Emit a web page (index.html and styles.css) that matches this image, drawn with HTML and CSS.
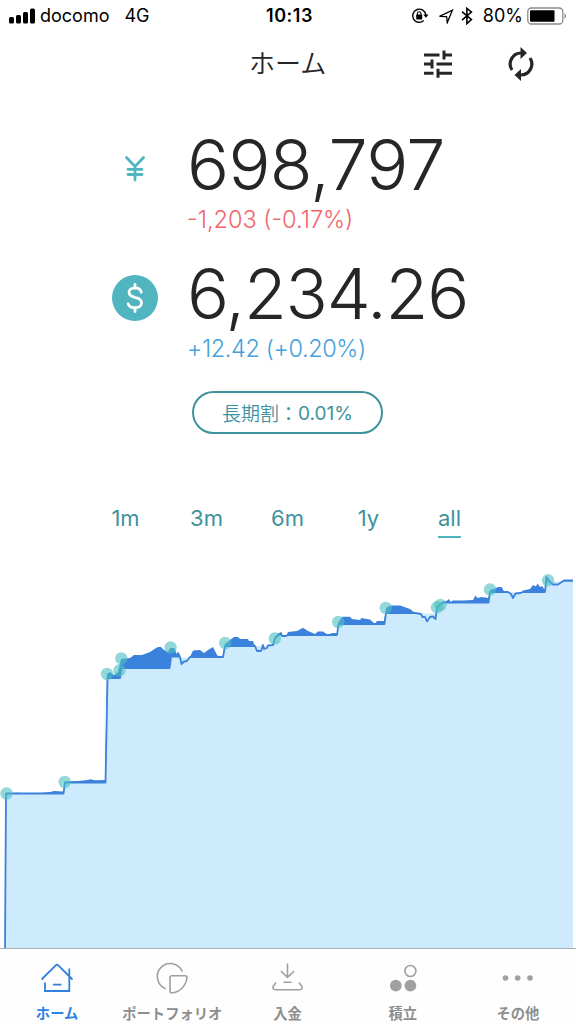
FILE: index.html
```html
<!DOCTYPE html>
<html lang="ja">
<head>
    <meta charset="UTF-8">
    <title>ホーム</title>
    <link rel="stylesheet" href="styles.css">
</head>
<body>
<div class="status">
    <div class="status-left">
        <svg class="signal" width="26" height="16" viewBox="0 0 26 16">
            <rect x="0" y="9" width="5" height="6.5" rx="1.5"/>
            <rect x="7" y="7" width="5" height="8.5" rx="1.5"/>
            <rect x="14" y="4" width="5" height="11.5" rx="1.5"/>
            <rect x="21" y="0.5" width="5" height="15" rx="1.5"/>
        </svg>
        <span class="carrier">docomo</span>
        <span class="net">4G</span>
    </div>
    <div class="time">10:13</div>
    <div class="status-right">
        <svg width="18" height="18" viewBox="0 0 18 18">
            <path d="M12.7 13.6A6.6 6.6 0 1 1 14.8 8" fill="none" stroke="#000" stroke-width="1.4"/>
            <path d="M12.3 7.6h5.2l-2.6 3.2z"/>
            <rect x="5.2" y="7.6" width="6" height="4.8" rx="0.6"/>
            <path d="M6.4 8V6.5a1.8 1.8 0 0 1 3.6 0V8" fill="none" stroke="#000" stroke-width="1.1"/>
        </svg>
        <svg class="arrow" width="16" height="15" viewBox="0 0 16 15">
            <path d="M1.5 7.4L14.4 1.2L9.3 13.6L8.6 7.6z" fill="none" stroke="#000" stroke-width="1.3"/>
        </svg>
        <svg class="bt" width="12" height="18" viewBox="0 0 12 18">
            <path d="M1 4.6L10.4 12.6L5.9 16.6V1.4L10.4 5L1 13.2" fill="none" stroke="#000" stroke-width="1.6"/>
        </svg>
        <span class="percent">80%</span>
        <svg width="40" height="18" viewBox="0 0 40 18">
            <rect x="0.8" y="1" width="35" height="16" rx="3.5" fill="none" stroke="#8c8c8c" stroke-width="1.3"/>
            <rect x="3" y="3.2" width="24.5" height="11.6" rx="1"/>
            <path d="M37.5 6.3c2 .8 2 4.6 0 5.4z" fill="#8c8c8c"/>
        </svg>
    </div>
</div>

<div class="header">
    <h1>ホーム</h1>
    <div class="tools">
        <svg width="28" height="28" viewBox="0 0 28 28">
            <g stroke="#262626" stroke-width="3" fill="none">
                <path d="M0 5h15.5M18.5 5h9.5M20 0.5v9"/>
                <path d="M0 14h6.5M12.5 14h15.5M8 9.5v9"/>
                <path d="M0 23.3h9.5M14 23.3h14M14 18.8v9"/>
            </g>
        </svg>
        <svg width="28" height="34" viewBox="0 0 28 34">
            <g stroke="#262626" stroke-width="3.2" fill="none">
                <path d="M5 23A11 11 0 0 1 14.5 6"/>
                <path d="M23 11A11 11 0 0 1 13.5 28"/>
            </g>
            <path d="M13.5 0l6.5 6-6.5 6zM14 22v12l-6.5-6z" fill="#262626"/>
        </svg>
    </div>
</div>

<div class="assets">
    <div class="asset">
        <div class="cur">
            <svg width="20" height="26" viewBox="0 0 20 26">
                <path d="M1.5 1.5L10 10.5L18.5 1.5M10 10.5V24M3 13.3H17M3 18.5H17" fill="none" stroke="#51b5c0" stroke-width="2.8" stroke-linecap="round"/>
            </svg>
        </div>
        <div class="amount">
            <div class="num yen">698,797</div>
            <div class="diff minus">-1,203 (-0.17%)</div>
        </div>
    </div>
    <div class="asset">
        <div class="cur cur-on">
            <svg width="18" height="32" viewBox="0 0 18 32">
                <path d="M15.3 10.2C14.6 7.5 12 5.9 9 5.9C5.6 5.9 3 7.8 3 10.6C3 17.4 15.6 13.6 15.6 20.8C15.6 23.8 12.8 25.7 9.2 25.7C6 25.7 3.1 24.3 2.2 21.9M9 2.5V6M9 25.7V29.5" fill="none" stroke="#fff" stroke-width="2.8" stroke-linecap="round"/>
            </svg>
        </div>
        <div class="amount">
            <div class="num usd">6,234.26</div>
            <div class="diff plus">+12.42 (+0.20%)</div>
        </div>
    </div>
</div>

<div class="discount"><span>長期割：</span><b>0.01%</b></div>

<div class="range">
    <a>1m</a>
    <a>3m</a>
    <a>6m</a>
    <a>1y</a>
    <a class="on">all</a>
</div>

<svg class="chart" width="576" height="388" viewBox="0 560 576 388">
    <!-- 評価額 -->
    <polygon fill="#3b82dc" points="5,948 6,793 20,792.8 31,794.2 35,793.5 50,792 54,791 63,791.5 65,781.5 78,781 88,780 90,779.3 95,780.3 105,780 107,674 110,672 114,675 118,672 121,659 130,658 134,655 142,655 150,652 156,648 158,647 161,647 164,650 168,652 170,648 174,648 176,656 178,653 180,657 181.5,664 184,661.5 187,661 190,657 193,650.5 200,650 204,653 208,650 213,647 217,655 220,657 223,656 225,644 230,640 234,637 238,637 240,639 248,639 249,641 253,641 256,649 257,651 261,651 263,645 264,649 267,648 268,645.5 273,645 275,638 279,634 281,633 282,636 286,636 288,632 297,631 303,627.7 308,631 315,634 318,631.5 323,631.5 328,635 332,633 337,633 338.5,622 342,616.7 350,616.7 352,619 360,620 361.5,618 370,619.5 375,624 377,621 384,621 386,609 387,607 391.5,605.5 400,605.5 410,609 415,613 421,614 422.5,617 425,617 427,621.5 430,617 433,616.5 435.5,619 437,608 440,605 442.5,602 446.5,601 449,599 451,603 452.5,600.5 463,600.5 473,600 475.5,595.5 477.5,598 481.5,597 488.5,598 490,590 495,588.5 498,587 501.5,587 504.5,592 508,592 511,594 513,598 515.5,593.5 520.5,593 523,590.5 530,589 533,585 536,586.5 537.5,583.5 540,587 542,586 545,590 546.5,577 550,582 553,584.5 558,584.5 564,580.5 573,580.5 573,948"/>
    <!-- 元本 -->
    <polygon fill="#ceeafd" points="5,948 6,794 63.5,794 65,783 105.5,783 107.5,678.5 120,678.5 121.5,668.5 169.5,668.5 171,657.5 223,657.5 225,646 273,646 275,635.5 337,635.5 338.5,624.5 384.5,624.5 386,613.5 436,613.5 438,603 488.5,603 490,592.3 545,592.3 547,581.5 573,581.5 573,948"/>
    <g fill="none" stroke="#3b82dc" stroke-width="1.8" stroke-linejoin="round">
        <polyline points="5,948 6,793.5 63.5,793.5 65,782.5 105.5,782.5 107.5,678 120,678 121.5,668 169.5,668 171,657.5"/>
        <polyline points="180,657 181.5,664 184,661.5 187,661 190,657 223,657 225,646 255,646 257,651 261,651 263,645 264,649 267,648 268,645.5 273,645 275,638 279,634 281,633 282,636 286,636 288,635 337,635 338.5,624 384.5,624 386,613 415,613 421,614 422.5,617 425,617 427,621.5 430,617 433,616.5 435.5,619 437,608 440,605 442.5,602.5 488.5,602.5 490,592 508,592 511,594 513,598 515.5,593.5 520.5,593 523,592 545,592 546.5,577 550,582 553,584.5 558,584.5 564,580.5 573,580.5"/>
        <polyline points="171,657 174,649 176,656 178,653 180,657"/>
    </g>
    <g class="dots">
        <circle cx="6.5" cy="793.5" r="6.2"/>
        <circle cx="64.7" cy="782" r="6.2"/>
        <circle cx="107" cy="674" r="6.2"/>
        <circle cx="119.5" cy="670.3" r="6.2"/>
        <circle cx="121.3" cy="658.5" r="6.2"/>
        <circle cx="170.6" cy="647.5" r="6.2"/>
        <circle cx="225.2" cy="643" r="6.2"/>
        <circle cx="274.8" cy="638.5" r="6.2"/>
        <circle cx="338.2" cy="622" r="6.2"/>
        <circle cx="385.8" cy="608" r="6.2"/>
        <circle cx="437" cy="607.3" r="6.2"/>
        <circle cx="440.5" cy="605" r="6.2"/>
        <circle cx="490" cy="589.5" r="6.2"/>
        <circle cx="548" cy="580.3" r="6.2"/>
    </g>
</svg>

<div class="tabbar">
    <a class="tab active">
        <svg width="36" height="36" viewBox="0 0 36 36">
            <path d="M2.5 19.5L16.7 5.4Q18 4.2 19.3 5.4L33.5 19.5M30.3 8.5V31H6V22.5M14 24.7H22.5" fill="none" stroke="#2f80e0" stroke-width="1.8"/>
        </svg>
        <span>ホーム</span>
    </a>
    <a class="tab">
        <svg width="36" height="36" viewBox="0 0 36 36">
            <path d="M28.3 11.5A13 13 0 1 0 12 28.8M16 17.8q0-2 2-2h13q2 0 2 1.5A17 17 0 0 1 17.5 33q-1.5 0-1.5-2z" fill="none" stroke="#a0a0a0" stroke-width="1.6"/>
        </svg>
        <span>ポートフォリオ</span>
    </a>
    <a class="tab">
        <svg width="36" height="36" viewBox="0 0 36 36">
            <path d="M18.5 3.5V17M11.8 11L18.5 17.3L25.2 11M14.5 22.3H22.5M7 22.5L4 26.5Q3.5 29.8 7 29.8H30Q33.5 29.8 33 26.5L30 22.5" fill="none" stroke="#a0a0a0" stroke-width="1.6"/>
        </svg>
        <span>入金</span>
    </a>
    <a class="tab">
        <svg width="36" height="36" viewBox="0 0 36 36">
            <circle cx="25.4" cy="11" r="5.5" fill="none" stroke="#a0a0a0" stroke-width="1.6"/>
            <circle cx="10.8" cy="25.6" r="5.9" fill="#a0a0a0"/>
            <circle cx="25.4" cy="25.6" r="5.9" fill="#a0a0a0"/>
        </svg>
        <span>積立</span>
    </a>
    <a class="tab">
        <svg width="36" height="36" viewBox="0 0 36 36" fill="#a0a0a0">
            <circle cx="5.5" cy="18" r="2.8"/>
            <circle cx="17.7" cy="18" r="2.8"/>
            <circle cx="30" cy="18" r="2.8"/>
        </svg>
        <span>その他</span>
    </a>
</div>
</body>
</html>
```
FILE: styles.css
```css
* {
    margin: 0;
    padding: 0;
    box-sizing: border-box;
}

body {
    width: 576px;
    height: 1024px;
    overflow: hidden;
    background-color: #fff;
    font-family: Inter, "Noto Sans CJK JP", sans-serif;
    color: #262626;
    display: flex;
    flex-direction: column;
}

svg {
    display: block;
    flex-shrink: 0;
}

/* status bar */
.status {
    height: 32px;
    padding: 0 9px;
    display: grid;
    grid-template-columns: 1fr 60px 1fr;
    align-items: center;
    color: #000;
    font-size: 18px;
    line-height: 32px;
}

.status-left, .status-right {
    display: flex;
    align-items: center;
}

.status-right {
    justify-content: flex-end;
}

.carrier {
    margin-left: 5px;
}

.net {
    margin-left: 15px;
}

.time {
    padding-left: 3px;
    text-align: center;
    font-weight: 600;
    letter-spacing: 0.5px;
    white-space: nowrap;
}

.arrow {
    margin-left: 9px;
}

.bt {
    margin-left: 7px;
}

.percent {
    margin: 0 4px 0 10px;
}

/* header */
.header {
    height: 64px;
    padding: 1px 41px 0 249px;
    display: flex;
    align-items: center;
    justify-content: space-between;
}

.header h1 {
    font-size: 26px;
    font-weight: 350;
    line-height: 36px;
}

.tools {
    display: flex;
    align-items: center;
    gap: 55px;
}

/* assets */
.assets {
    padding: 32px 0 0 112px;
}

.asset {
    height: 129px;
    display: flex;
}

.cur {
    width: 46px;
    height: 46px;
    margin: 19px 29px 0 0;
    display: flex;
    align-items: center;
    justify-content: center;
}

.cur-on {
    border-radius: 50%;
    background-color: #51b5c0;
}

.num {
    height: 77px;
    font-size: 70px;
    line-height: 76px;
    font-weight: 300;
    white-space: nowrap;
}

.yen {
    letter-spacing: -0.7px;
}

.usd {
    letter-spacing: -1.3px;
}

.diff {
    font-size: 23.5px;
    line-height: 32px;
    font-weight: 300;
    white-space: nowrap;
}

.minus {
    color: #f0656c;
}

.plus {
    color: #459fdc;
    letter-spacing: -0.4px;
}

.discount {
    width: 191px;
    height: 43px;
    margin: 6px 0 0 192px;
    border: 2px solid #3e929e;
    border-radius: 22px;
    display: flex;
    align-items: center;
    justify-content: center;
    color: #3e929e;
    font-size: 19px;
    font-weight: 350;
    white-space: nowrap;
}

.discount b {
    padding-top: 1px;
    font-weight: 400;
}

/* range */
.range {
    height: 38px;
    margin: 66px 86px 0 85px;
    display: grid;
    grid-template-columns: repeat(5, 1fr);
    justify-items: center;
    color: #3e929e;
    font-size: 22px;
    line-height: 36px;
}

.range .on {
    border-bottom: 2px solid #51b5c0;
}

/* chart */
.chart {
    margin-top: 22px;
}

.dots {
    fill: #4dbfc0;
    fill-opacity: 0.6;
}

/* tab bar */
.tabbar {
    height: 76px;
    border-top: 1px solid #a4b0b8;
    background-color: #fefefe;
    display: grid;
    grid-template-columns: repeat(5, 1fr);
}

.tab {
    padding: 11px 1px 0 0;
    display: flex;
    flex-direction: column;
    align-items: center;
    color: #8e8e8e;
    font-size: 14.3px;
    line-height: 20px;
    font-weight: 700;
    white-space: nowrap;
}

.tab span {
    margin-top: 8px;
}

.active {
    color: #2f80e0;
}
```
